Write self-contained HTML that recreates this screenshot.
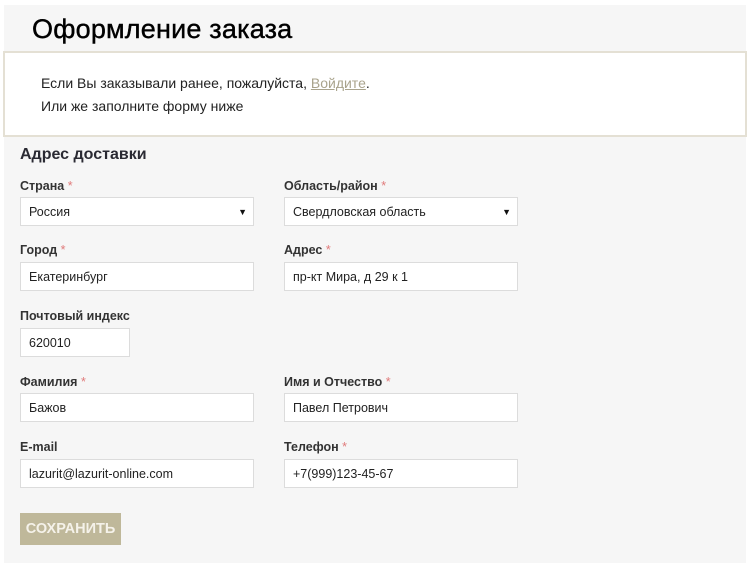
<!DOCTYPE html>
<html><head><meta charset="utf-8"><style>
*{box-sizing:border-box;margin:0;padding:0}
body{width:750px;height:570px;background:#fff;font-family:"Liberation Sans","DejaVu Sans",sans-serif;color:#222;position:relative;overflow:hidden}
.panel{position:absolute;left:4px;top:5px;width:742px;height:558px;background:#f6f6f6}
h1{position:absolute;left:32px;top:14px;font-size:27px;font-weight:normal;color:#000;letter-spacing:.2px;-webkit-text-stroke:.4px #000}
.note{position:absolute;left:3px;top:51px;width:744px;height:86px;background:#fff;border:2px solid #e4e0d4}
.note p{position:absolute;left:36px;font-size:14px;color:#222}
.note a{color:#a9a38c;text-decoration:underline}
h2{position:absolute;left:20px;top:146px;font-size:16px;font-weight:bold;color:#2a2a33}
.l{position:absolute;font-size:12.5px;font-weight:bold;color:#333}
.l b{color:#e07a7a;font-weight:normal}
.i{position:absolute;height:29px;background:#fff;border:1px solid #dcdcdc;font-size:12.5px;line-height:28px;padding-left:8px;color:#222}
.s::after{content:"▼";position:absolute;right:6px;top:0;font-size:9px;color:#111}
.btn{position:absolute;left:20px;top:513px;width:101px;height:32px;background:#bfb89a;color:#f5f2ea;font-weight:bold;font-size:14.5px;line-height:32px;text-align:center}
</style></head><body>
<div class="panel"></div>
<h1>Оформление заказа</h1>
<div class="note">
<p style="top:22px">Если Вы заказывали ранее, пожалуйста, <a>Войдите</a>.</p>
<p style="top:45px">Или же заполните форму ниже</p>
</div>
<h2>Адрес доставки</h2>
<div class="l" style="left:20px;top:179px">Страна <b>*</b></div>
<div class="l" style="left:284px;top:179px">Область/район <b>*</b></div>
<div class="i s" style="left:20px;top:197px;width:234px">Россия</div>
<div class="i s" style="left:284px;top:197px;width:234px">Свердловская область</div>
<div class="l" style="left:20px;top:243px">Город <b>*</b></div>
<div class="l" style="left:284px;top:243px">Адрес <b>*</b></div>
<div class="i" style="left:20px;top:262px;width:234px">Екатеринбург</div>
<div class="i" style="left:284px;top:262px;width:234px">пр-кт Мира, д 29 к 1</div>
<div class="l" style="left:20px;top:309px">Почтовый индекс</div>
<div class="i" style="left:20px;top:328px;width:110px">620010</div>
<div class="l" style="left:20px;top:375px">Фамилия <b>*</b></div>
<div class="l" style="left:284px;top:375px">Имя и Отчество <b>*</b></div>
<div class="i" style="left:20px;top:393px;width:234px">Бажов</div>
<div class="i" style="left:284px;top:393px;width:234px">Павел Петрович</div>
<div class="l" style="left:20px;top:440px">E-mail</div>
<div class="l" style="left:284px;top:440px">Телефон <b>*</b></div>
<div class="i" style="left:20px;top:459px;width:234px">lazurit@lazurit-online.com</div>
<div class="i" style="left:284px;top:459px;width:234px">+7(999)123-45-67</div>
<div class="btn">СОХРАНИТЬ</div>
</body></html>
